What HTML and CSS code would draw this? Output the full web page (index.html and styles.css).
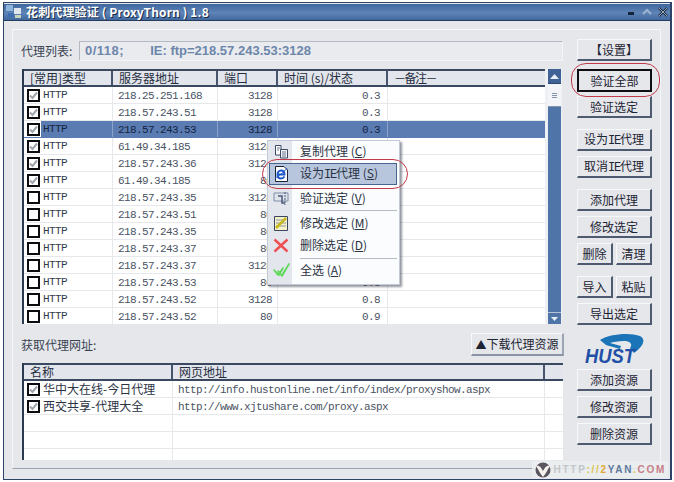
FILE: index.html
```html
<!DOCTYPE html>
<html lang="zh">
<head>
<meta charset="utf-8">
<title>花刺代理验证</title>
<link rel="stylesheet" href="styles.css">
</head>
<body>
<div class="window">
  <div class="titlebar">
    <svg class="appicon" width="16" height="14" viewBox="0 0 16 14"><rect x="0" y="0" width="7" height="6" fill="#8fb4dc"/><rect x="8" y="3" width="7" height="6" fill="#dfe6ee"/><rect x="2" y="8" width="6" height="4" fill="#3f6fb0"/><rect x="9" y="10" width="6" height="3" fill="#c8d4b8"/></svg>
    <span class="title">花刺代理验证 ( ProxyThorn ) 1.8</span>
    <span class="winctl">
      <svg width="10" height="10" viewBox="0 0 10 10"><rect x="2" y="5" width="6" height="3" fill="#14233c"/></svg>
      <svg width="10" height="10" viewBox="0 0 10 10"><path d="M1 7 5 3 9 7" fill="none" stroke="#9db4d0" stroke-width="2"/></svg>
      <svg width="10" height="10" viewBox="0 0 10 10"><path d="M1 1 9 9M9 1 1 9" stroke="#14233c" stroke-width="2.4"/><path d="M1 1 9 9M9 1 1 9" stroke="#dfe6ee" stroke-width=".7"/></svg>
    </span>
  </div>
  <div class="panel">
    <div class="left">
      <div class="proxyrow">
        <span class="label">代理列表:</span>
        <div class="field"><span class="count">0/118;</span><span class="ie-info">IE: ftp=218.57.243.53:3128</span></div>
      </div>

      <div class="list list-main">
        <div class="body">
          <div class="head cols-main"><span>[常用]类型</span><span>服务器地址</span><span>端口</span><span>时间 (s)/状态</span><span class="note">－备注－</span></div>
          <div class="row cols-main"><span class="c1"><i class="cb on"></i><b>HTTP</b></span><span>218.25.251.168</span><span class="r">3128</span><span class="r t">0.3</span><span></span></div>
          <div class="row cols-main"><span class="c1"><i class="cb on"></i><b>HTTP</b></span><span>218.57.243.51</span><span class="r">3128</span><span class="r t">0.3</span><span></span></div>
          <div class="row cols-main sel"><span class="c1"><i class="cb on"></i><b>HTTP</b></span><span>218.57.243.53</span><span class="r">3128</span><span class="r t">0.3</span><span></span></div>
          <div class="row cols-main"><span class="c1"><i class="cb on"></i><b>HTTP</b></span><span>61.49.34.185</span><span class="r">3128</span><span></span><span></span></div>
          <div class="row cols-main"><span class="c1"><i class="cb on"></i><b>HTTP</b></span><span>218.57.243.36</span><span class="r">3128</span><span></span><span></span></div>
          <div class="row cols-main"><span class="c1"><i class="cb on"></i><b>HTTP</b></span><span>61.49.34.185</span><span class="r">80</span><span></span><span></span></div>
          <div class="row cols-main"><span class="c1"><i class="cb"></i><b>HTTP</b></span><span>218.57.243.35</span><span class="r">3128</span><span></span><span></span></div>
          <div class="row cols-main"><span class="c1"><i class="cb"></i><b>HTTP</b></span><span>218.57.243.51</span><span class="r">80</span><span></span><span></span></div>
          <div class="row cols-main"><span class="c1"><i class="cb"></i><b>HTTP</b></span><span>218.57.243.35</span><span class="r">80</span><span></span><span></span></div>
          <div class="row cols-main"><span class="c1"><i class="cb"></i><b>HTTP</b></span><span>218.57.243.37</span><span class="r">80</span><span></span><span></span></div>
          <div class="row cols-main"><span class="c1"><i class="cb"></i><b>HTTP</b></span><span>218.57.243.37</span><span class="r">3128</span><span></span><span></span></div>
          <div class="row cols-main"><span class="c1"><i class="cb"></i><b>HTTP</b></span><span>218.57.243.53</span><span class="r">80</span><span class="r t">0.8</span><span></span></div>
          <div class="row cols-main"><span class="c1"><i class="cb"></i><b>HTTP</b></span><span>218.57.243.52</span><span class="r">3128</span><span class="r t">0.8</span><span></span></div>
          <div class="row cols-main"><span class="c1"><i class="cb"></i><b>HTTP</b></span><span>218.57.243.52</span><span class="r">80</span><span class="r t">0.9</span><span></span></div>
        </div>
        <div class="scrollbar">
          <div class="arrow up"><svg width="9" height="5" viewBox="0 0 9 5"><path d="M4.5 0 9 5H0Z" fill="#e8eef6"/></svg></div>
          <div class="thumb"><svg width="5" height="5" viewBox="0 0 5 5"><path d="M0 .5H5M0 2.5H5M0 4.500H5" stroke="#8494aa"/></svg></div>
          <div class="track"></div>
          <div class="arrow down"><svg width="7" height="4" viewBox="0 0 7 4"><path d="M0 0H7L3.500 4Z" fill="#e8eef6"/></svg></div>
        </div>
      </div>

      <div class="fetchrow">
        <span class="label">获取代理网址:</span>
        <button class="btn dl"><span class="tri">▲</span>下载代理资源</button>
      </div>

      <div class="list list-src">
        <div class="body">
          <div class="head cols-src"><span>名称</span><span>网页地址</span><span></span></div>
          <div class="row cols-src"><span class="c1 cn"><i class="cb on"></i>华中大在线-今日代理</span><span class="url">http://info.hustonline.net/info/index/proxyshow.aspx</span><span></span></div>
          <div class="row cols-src"><span class="c1 cn"><i class="cb on"></i>西交共享-代理大全</span><span class="url">http://www.xjtushare.com/proxy.aspx</span><span></span></div>
          <div class="row cols-src"><span></span><span></span><span></span></div>
          <div class="row cols-src"><span></span><span></span><span></span></div>
          <div class="row cols-src short"><span></span><span></span><span></span></div>
        </div>
      </div>
    </div>

    <div class="right">
      <button class="btn">【设置】</button>
      <button class="btn focus s1">验证全部</button>
      <button class="btn s1b">验证选定</button>
      <button class="btn s3">设为<span class="ie">IE</span>代理</button>
      <button class="btn s2">取消<span class="ie">IE</span>代理</button>
      <button class="btn s3">添加代理</button>
      <button class="btn s2">修改选定</button>
      <div class="pair s2b"><button class="btn">删除</button><button class="btn">清理</button></div>
      <div class="pair s3c"><button class="btn">导入</button><button class="btn">粘贴</button></div>
      <button class="btn s2">导出选定</button>
      <svg class="logo" width="64" height="32" viewBox="0 0 64 32">
        <path d="M18 7C26 1 48-1 58 3 64 6 62 13 52 20L48 15C51 11 48 8 42 8 36 8 31 9 28 10L39 13 38 16 24 12C22 10 20 9 18 7Z" fill="#1c74b8"/>
        <text x="3" y="30" class="logotext" textLength="50" lengthAdjust="spacingAndGlyphs">HUST</text>
      </svg>
      <button class="btn s4">添加资源</button>
      <button class="btn s2">修改资源</button>
      <button class="btn s2">删除资源</button>
    </div>
  </div>
</div>

<div class="menu">
  <div class="mi first"><svg width="15" height="15" viewBox="0 0 15 15"><path d="M1.500 1.500H7V11H1.500Z" fill="#fff" stroke="#3c4a66"/><path d="M6.500 5.500H13.500V14H6.500Z" fill="#f4f4f4" stroke="#3c4a66"/><path d="M8 8H12M8 10H12M8 12H12M3 4H6M3 6H5" stroke="#6a7a94"/></svg><span>复制代理 (<u>C</u>)</span></div>
  <div class="mi hot"><svg width="18" height="18" viewBox="0 0 18 18"><path d="M3.500 1.500H12L15.500 5V16.500H3.500Z" fill="#fff" stroke="#1a2238"/><path d="M5.500 9.500H12.500C12.500 7 11 5.500 9 5.500 7 5.500 5.500 7.500 5.500 9.500 5.500 12 7 13.500 9 13.500 10.500 13.500 11.500 13 12.500 11.500" fill="none" stroke="#1d58c8" stroke-width="2"/><path d="M3 13C6 12 12 7 15 3" fill="none" stroke="#1d58c8" stroke-width="1"/></svg><span>设为<span class="ie">IE</span>代理 (<u>S</u>)</span></div>
  <div class="mi after-hot"><svg width="17" height="16" viewBox="0 0 17 16"><path d="M1 3H15V11H1Z" fill="#dfe4ec" stroke="#7e8ea8"/><path d="M5 6H9V13H12" fill="none" stroke="#4a5a78" stroke-width="1.500"/><path d="M12 2V15" stroke="#4a5a78" stroke-dasharray="2 1"/></svg><span>验证选定 (<u>V</u>)</span></div>
  <div class="sep"></div>
  <div class="mi"><svg width="16" height="17" viewBox="0 0 16 17"><path d="M1.500 1.500H14.500V15.500H1.500Z" fill="#f6f2c8" stroke="#3a4660"/><path d="M3 5H13M3 8H13M3 11H13" stroke="#8a94a4"/><path d="M3 13 13 3" stroke="#c8b820" stroke-width="2.500"/></svg><span>修改选定 (<u>M</u>)</span></div>
  <div class="mi"><svg width="16" height="15" viewBox="0 0 16 15"><path d="M1.500 1.500 14.500 13.500M14.500 1.500 1.500 13.500" stroke="#ef4f50" stroke-width="2.400"/></svg><span>删除选定 (<u>D</u>)</span></div>
  <div class="sep sep2"></div>
  <div class="mi"><svg width="17" height="14" viewBox="0 0 17 14"><path d="M1 7 5 12 10 5 6 12ZM5 8 9 12 16 1 9 13Z" fill="#5fd85a" stroke="#5fd85a" stroke-width="1.600" stroke-linejoin="round"/></svg><span>全选 (<u>A</u>)</span></div>
</div>

<div class="oval oval-btn"></div>
<div class="oval oval-menu"></div>

<div class="mark">
  <svg width="18" height="16" viewBox="0 0 18 16"><circle cx="9" cy="8" r="7.500" fill="#5b5560"/><path d="M2 4C6 3 7 6 9 9 11 6 12 3 16 4 13 8 12 12 9 15 6 12 5 8 2 4Z" fill="#f4f1ea"/></svg>
  <span class="h">HTTP</span><span class="y">://</span><span class="o">2</span><span class="b">YAN</span><span class="y">.</span><span class="r2">COM</span>
</div>
</body>
</html>
```
FILE: styles.css
```css
* { box-sizing: border-box; }
html, body { margin: 0; padding: 0; }
body {
  width: 674px;
  height: 482px;
  overflow: hidden;
  position: relative;
  background: #fff;
  font: 12px "Noto Sans CJK SC", "Liberation Sans", sans-serif;
  color: #20283a;
  padding: 2px 2px 1px 3px;
}
.window {
  height: 478px;
  display: flex;
  flex-direction: column;
  background: #e5e7eb;
  border: 1px solid #2d4468;
  border-width: 1px 2px 1px 1px;
  padding-bottom: 10px;
}
.titlebar {
  height: 17px;
  flex: none;
  display: flex;
  align-items: center;
  padding: 0 2px;
  background: linear-gradient(#3e679e, #5f84b6 55%, #41689e);
  border-bottom: 1px solid #263c5e;
  margin: 1px 0 0;
}
.appicon { flex: none; margin-right: 4px; }
.title {
  color: #fff;
  font-weight: 700;
  font-size: 12px;
  line-height: 14px;
  letter-spacing: .15px;
  text-shadow: 1px 1px 0 #1d2c48;
  white-space: pre;
}
.winctl { margin-left: auto; display: flex; gap: 6px; }
.panel {
  flex: 1;
  display: flex;
  margin: 8px 9px 0 8px;
  padding: 9px 10px 0 7px;
  border: 1px solid #f4f5f8;
  border-top-color: #f8f9fb;
  border-bottom-color: #9aa2b0;
  gap: 13px;
  min-height: 0;
}
.left { width: 544px; flex: none; display: flex; flex-direction: column; padding-top: 2px; }
.right { width: 75px; flex: none; display: flex; flex-direction: column; }
.label { color: #3a4252; font-size: 12px; line-height: 16px; white-space: nowrap; margin-left: 1px; }
.proxyrow { display: flex; align-items: center; height: 19px; }
.field {
  width: 484px;
  height: 20px;
  margin-left: auto;
  margin-right: 1px;
  padding-left: 5px;
  display: flex;
  align-items: center;
  background: #e9ebef;
  border: 1px solid #f5f6f8;
  border-top-color: #b4bac4;
  border-left-color: #b4bac4;
  color: #6d86aa;
  font: 700 13px "Liberation Sans", sans-serif;
  white-space: nowrap;
}
.count { letter-spacing: .5px; }
.ie-info { margin-left: 26px; }
.list {
  display: flex;
  margin-left: 2px;
  background: #fff;
  border-left: 2px solid #2c3a50;
  overflow: hidden;
}
.list-main { height: 255px; width: 540px; margin-top: 9px; }
.list-src { height: 97px; width: 541px; margin-top: 7px; }
.body { flex: 1; min-width: 0; }
.head {
  height: 18px;
  background: #e2e5eb;
  border-top: 2px solid #3a4860;
  border-bottom: 2px solid #3a4860;
  font-size: 12px;
  line-height: 14px;
  color: #252d3f;
}
.head span {
  padding-left: 6px;
  border-right: 2px solid #46546c;
  white-space: nowrap;
}
.head span:last-child { border-right: 0; }
.head .note { letter-spacing: -1.500px; }
.cols-main { display: grid; grid-template-columns: 89px 105px 60px 110px 1fr; }
.cols-src { display: grid; grid-template-columns: 149px 372px 1fr; }
.row {
  height: 17px;
  border-bottom: 1px solid #e6e8ec;
  font: 11px/19px "Liberation Mono", monospace;
  letter-spacing: -.6px;
  color: #4a5364;
}
.row > span {
  display: block;
  padding-left: 5px;
  border-right: 1px solid #e6e8ec;
  white-space: nowrap;
  overflow: hidden;
  height: 16px;
}
.row > span:last-child { border-right: 0; }
.row > .r { text-align: right; padding-right: 5px; padding-left: 0; }
.row > .t { padding-right: 7px; }
.row b { font-weight: 400; color: #343c4c; margin-left: 3px; }
.row > .c1 { display: flex; align-items: center; padding-left: 3px; overflow: visible; }
.row > .cn { font: 12px/16px "Noto Sans CJK SC", sans-serif; letter-spacing: 0; color: #2b3344; }
.cn .cb { margin-right: 3px; }
.cb {
  flex: none;
  width: 13px;
  height: 13px;
  border: 2px solid #0c0c10;
  background: #fff;
}
.cb.on {
  background: #fff url("data:image/svg+xml,%3Csvg xmlns='http://www.w3.org/2000/svg' width='9' height='9'%3E%3Cpath d='M1 4.500 3.500 7 8 1.500' fill='none' stroke='%23a0a6b0' stroke-width='2'/%3E%3C/svg%3E") no-repeat center;
}
.sel { background: linear-gradient(90deg, #fff 17px, #5a7cb2 17px); border-bottom-color: #5a7cb2; }
.row.sel > span { color: #14233f; border-right-color: #8ba3c8; }
.sel b { color: #14233f; }
.short { height: 11px; border-bottom: 0; }
.row.short > span { height: 11px; }
.scrollbar {
  width: 17px;
  flex: none;
  display: flex;
  flex-direction: column;
  background: #eef0f4;
  padding: 0 1px 0 3px;
}
.arrow { display: flex; align-items: center; justify-content: center; flex: none; }
.up { height: 15px; background: #3f6296; border-bottom: 1px solid #2c4670; }
.thumb {
  height: 23px;
  flex: none;
  background: #f2f4f8;
  border-bottom: 1px solid #8494aa;
  display: flex;
  align-items: center;
  justify-content: center;
}
.track { flex: 1; background: #4f74a8; }
.down { height: 12px; background: #4f74a8; border-top: 1px solid #b7c4d8; }
.fetchrow { display: flex; align-items: center; justify-content: space-between; margin-top: 9px; height: 23px; }
.btn {
  display: block;
  padding: 0;
  height: 22px;
  width: 100%;
  background: #e5e7eb;
  border: 1px solid #f7f8fa;
  border-right: 2px solid #4d5a70;
  border-bottom: 2px solid #4d5a70;
  color: #1d2433;
  font: 12px/18px "Noto Sans CJK SC", sans-serif;
  white-space: nowrap;
  text-align: center;
}
.ie { font-family: "Liberation Mono", monospace; font-size: 12px; letter-spacing: -1.200px; }
.btn.dl { width: 93px; height: 23px; border-right-color: #9aa4b4; border-bottom-color: #8a94a6; }
.tri { font-size: 11px; }
.btn.focus { border: 2px solid #0e0e12; height: 23px; }
.s1 { margin-top: 8px; }
.s1b { margin-top: 4px; }
.s2 { margin-top: 5px; }
.s3 { margin-top: 11px; }
.s4 { margin-top: 4px; }
.pair { display: flex; gap: 3px; }
.pair .btn { width: 36px; }
.s2b { margin-top: 5px; }
.s3c { margin-top: 11px; }
.logo { margin: 8px 0 0 5px; flex: none; }
.logotext { font: italic 700 20px "Liberation Sans", sans-serif; fill: #1f4fa6; }
.menu {
  position: absolute;
  left: 267px;
  top: 140px;
  width: 133px;
  height: 145px;
  padding: 0 2px 0 1px;
  background: linear-gradient(90deg, #e3e6ec 24px, #fbfcfd 24px);
  border: 1px solid #c4cad4;
  box-shadow: 2px 2px 2px rgba(60, 65, 80, .55);
}
.mi {
  height: 22px;
  display: grid;
  grid-template-columns: 22px 1fr;
  align-items: center;
  justify-items: center;
  color: #2a3244;
  font-size: 12px;
  line-height: 16px;
  border: 1px solid transparent;
}
.mi > span { justify-self: start; padding: 0 0 1px 8px; white-space: nowrap; }
.mi.first { height: 21px; margin-bottom: 1px; }
.hot { background: #b7c6dc; border-color: #47668f; }
.after-hot { margin-top: 2px; }
.sep { height: 1px; margin: 1px 0 1px 31px; background: #b5bbc6; }
.sep2 { margin: 2px 0 0 31px; }
.oval { position: absolute; border: 1px solid #c23a4a; border-radius: 15px; pointer-events: none; }
.oval-btn { left: 571px; top: 63px; width: 89px; height: 34px; }
.oval-menu { left: 262px; top: 159px; width: 146px; height: 30px; }
.mark {
  position: absolute;
  right: 6px;
  top: 461px;
  height: 17px;
  display: flex;
  align-items: center;
  padding: 0 2px;
  background: rgba(236, 238, 240, .85);
  font: 700 10px "Liberation Sans", sans-serif;
  letter-spacing: 1.700px;
}
.mark svg { margin-right: 2px; }
.h { color: #c2c6cb; }
.y { color: #e0c24e; }
.o { color: #e0a832; }
.b { color: #5e7a9e; }
.r2 { color: #c8808a; }
```
